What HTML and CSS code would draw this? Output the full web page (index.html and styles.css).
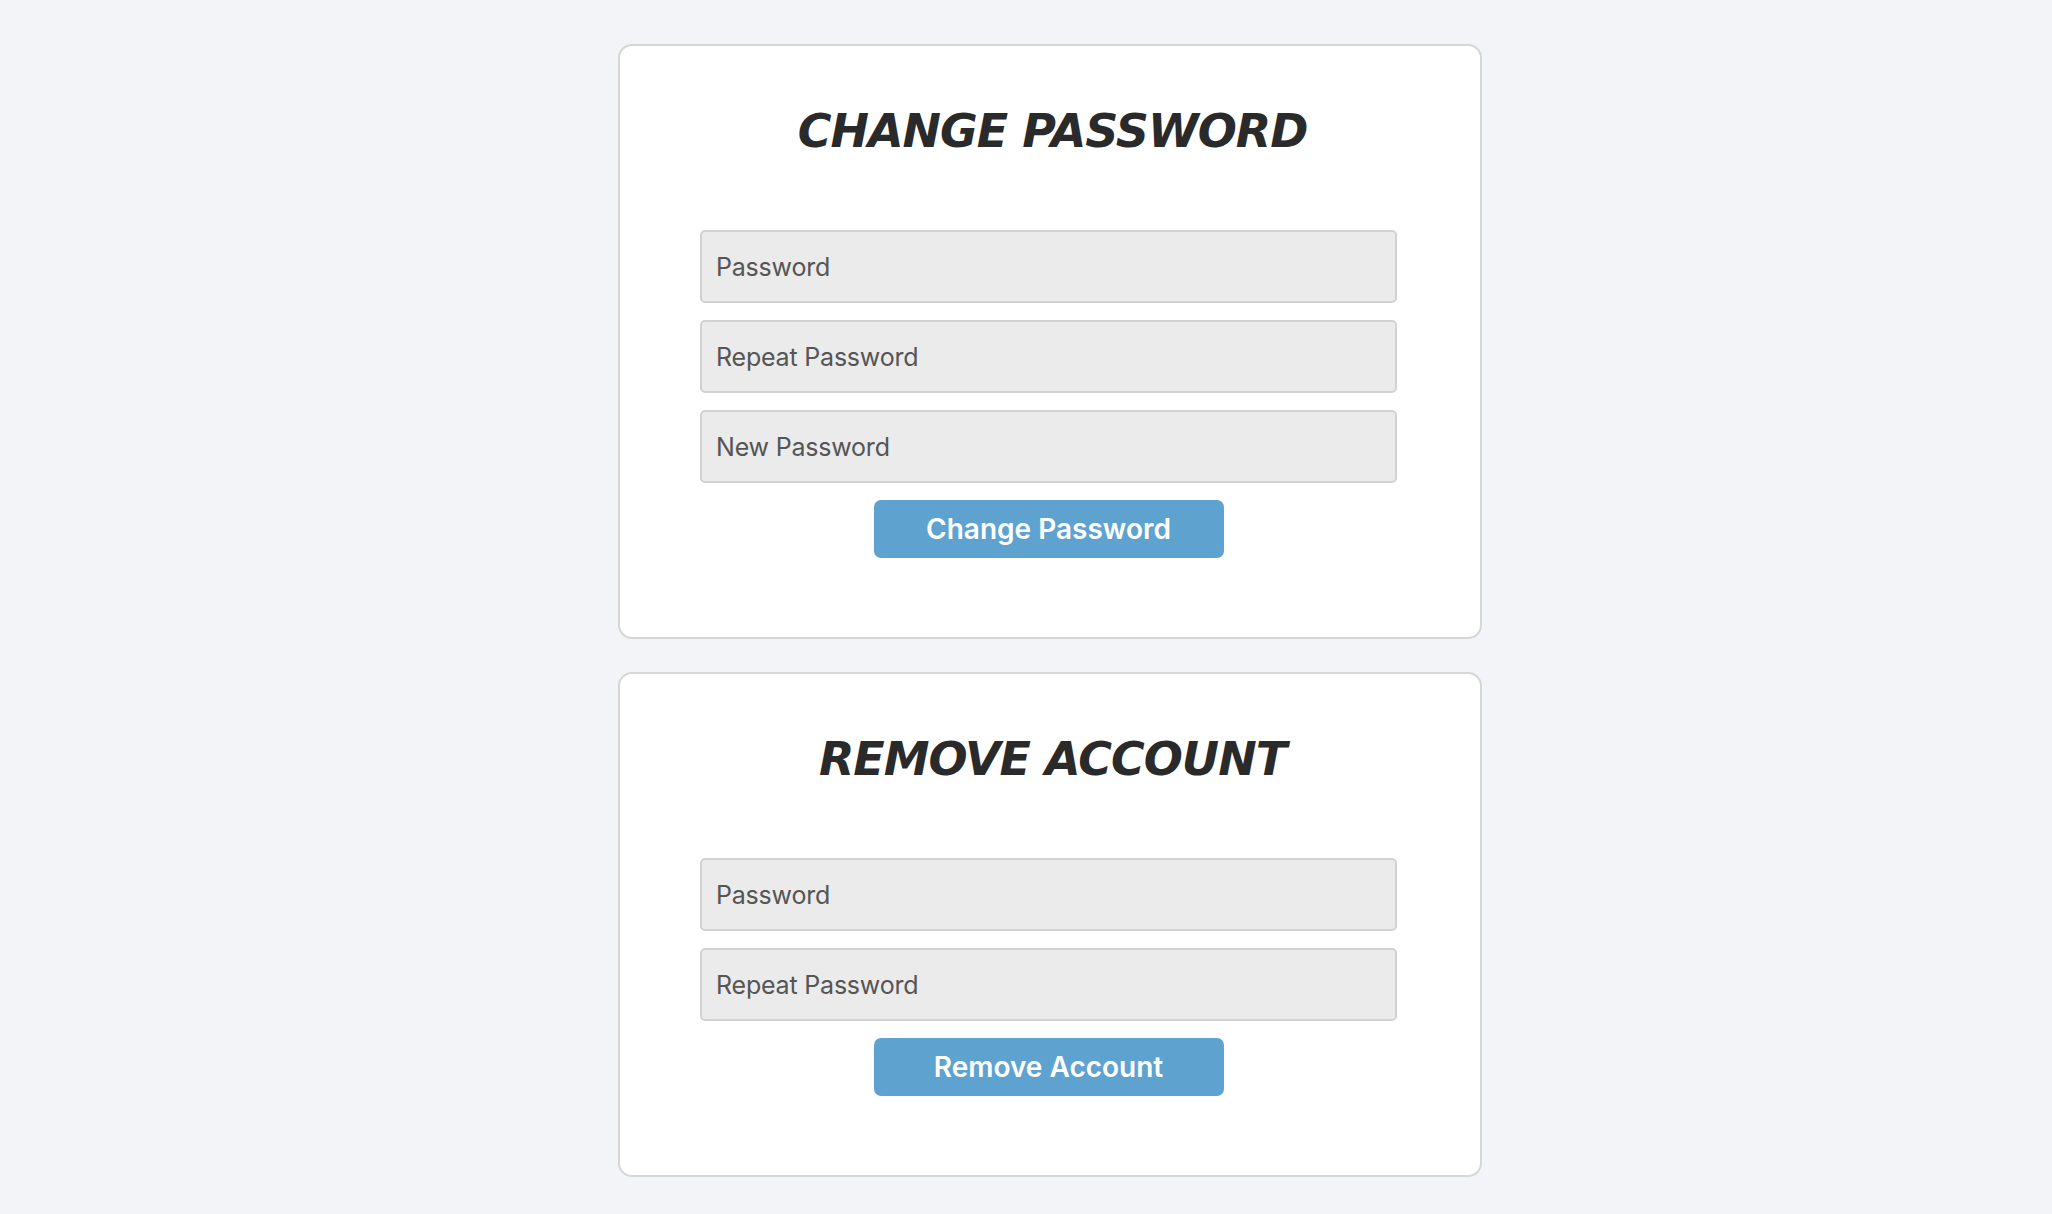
FILE: index.html
```html
<!DOCTYPE html>
<html>
<head>
<meta charset="utf-8">
<link rel="stylesheet" href="styles.css">
</head>
<body>
<main class="page">
  <section class="card">
    <h1 class="card-title">CHANGE PASSWORD</h1>
    <form class="form">
      <input class="field" type="password" placeholder="Password">
      <input class="field" type="password" placeholder="Repeat Password">
      <input class="field" type="password" placeholder="New Password">
      <button class="btn" type="button">Change Password</button>
    </form>
  </section>
  <section class="card">
    <h1 class="card-title">REMOVE ACCOUNT</h1>
    <form class="form">
      <input class="field" type="password" placeholder="Password">
      <input class="field" type="password" placeholder="Repeat Password">
      <button class="btn" type="button">Remove Account</button>
    </form>
  </section>
</main>
</body>
</html>
```
FILE: styles.css
```css
html, body {
  margin: 0;
  padding: 0;
  background: #f3f4f8;
}
.page {
  padding: 44px 0 0 48px;
  display: flex;
  flex-direction: column;
  align-items: center;
  gap: 33px;
}
.card {
  box-sizing: border-box;
  width: 864px;
  background: #ffffff;
  border: 2px solid #d6d6d6;
  border-radius: 14px;
  padding: 55px 83px 79px 80px;
}
.card-title {
  margin: 0 0 69px 0;
  padding-left: 8px;
  height: 60px;
  line-height: 60px;
  text-align: center;
  font-family: "DejaVu Sans", sans-serif;
  font-style: italic;
  font-weight: 700;
  font-size: 46px;
  letter-spacing: -1px;
  color: #2a2a2a;
}
.form {
  display: flex;
  flex-direction: column;
  gap: 17px;
  margin: 0;
}
.field {
  box-sizing: border-box;
  width: 697px;
  height: 73px;
  margin: 0;
  padding: 0 14px;
  background: #ebebeb;
  border: 2px solid #d2d2d2;
  border-radius: 5px;
  font-family: Inter, "Liberation Sans", sans-serif;
  font-size: 25px;
  letter-spacing: -0.2px;
  color: #555555;
  outline: none;
}
.field::placeholder {
  color: #555555;
  opacity: 1;
}
.btn {
  box-sizing: border-box;
  align-self: center;
  width: 350px;
  height: 58px;
  padding: 0;
  border: none;
  border-radius: 7px;
  background: #5ea3cf;
  color: #ffffff;
  font-family: Inter, "Liberation Sans", sans-serif;
  font-weight: 600;
  font-size: 28px;
  cursor: pointer;
}
```
